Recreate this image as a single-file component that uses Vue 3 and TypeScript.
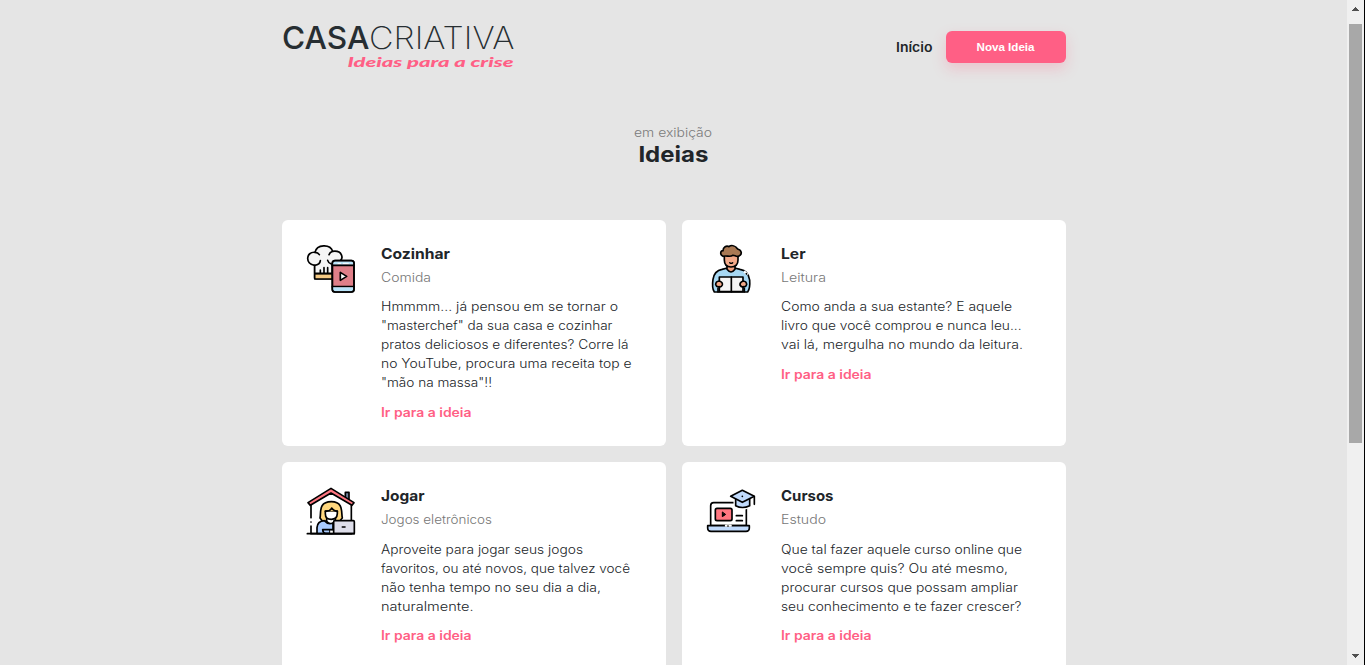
<script setup lang="ts">
import type { Directive } from 'vue'

interface Line { text: string; width: number }
interface Idea {
  icon: string
  title: Line
  category: Line
  lines: Line[]
}

const link: Line = { text: 'Ir para a ideia', width: 90.5 }

const ideas: Idea[] = [
  {
    icon: 'chef',
    title: { text: 'Cozinhar', width: 69 },
    category: { text: 'Comida', width: 50 },
    lines: [
      { text: 'Hmmmm... já pensou em se tornar o', width: 237 },
      { text: '"masterchef" da sua casa e cozinhar', width: 231.5 },
      { text: 'pratos deliciosos e diferentes? Corre lá', width: 247.5 },
      { text: 'no YouTube, procura uma receita top e', width: 250.5 },
      { text: '"mão na massa"!!', width: 111 },
    ],
  },
  {
    icon: 'reader',
    title: { text: 'Ler', width: 24.5 },
    category: { text: 'Leitura', width: 45 },
    lines: [
      { text: 'Como anda a sua estante? E aquele', width: 231 },
      { text: 'livro que você comprou e nunca leu...', width: 240.5 },
      { text: 'vai lá, mergulha no mundo da leitura.', width: 242 },
    ],
  },
  {
    icon: 'home',
    title: { text: 'Jogar', width: 43.5 },
    category: { text: 'Jogos eletrônicos', width: 111 },
    lines: [
      { text: 'Aproveite para jogar seus jogos', width: 202 },
      { text: 'favoritos, ou até novos, que talvez você', width: 249 },
      { text: 'não tenha tempo no seu dia a dia,', width: 220 },
      { text: 'naturalmente.', width: 92.5 },
    ],
  },
  {
    icon: 'course',
    title: { text: 'Cursos', width: 52.5 },
    category: { text: 'Estudo', width: 45 },
    lines: [
      { text: 'Que tal fazer aquele curso online que', width: 241 },
      { text: 'você sempre quis? Ou até mesmo,', width: 227 },
      { text: 'procurar cursos que possam ampliar', width: 237 },
      { text: 'seu conhecimento e te fazer crescer?', width: 240.5 },
    ],
  },
]

// Widens a line of text so that it takes the given measure.
const vFit: Directive<HTMLElement, number> = {
  mounted(el, { value }) {
    const natural = el.getBoundingClientRect().width
    if (natural > 0) el.style.transform = `scaleX(${value / natural})`
  },
}
</script>

<template>
  <div class="window">
    <div class="page">
      <header class="header">
        <svg class="logo" width="236" height="54" viewBox="0 -4 236 54">
          <text class="logo-strong" x="1" y="27" textLength="87.5" lengthAdjust="spacingAndGlyphs">CASA</text>
          <text class="logo-thin" x="88" y="27" textLength="145.5" lengthAdjust="spacingAndGlyphs">CRIATIVA</text>
          <text class="logo-tag" x="66.5" y="44.5" textLength="166" lengthAdjust="spacingAndGlyphs">Ideias para a crise</text>
        </svg>
        <nav class="nav">
          <a class="home-link"><span v-fit="36.5" class="fit">Início</span></a>
          <button class="button"><span v-fit="58" class="fit centered">Nova Ideia</span></button>
        </nav>
      </header>

      <section class="heading">
        <p><span v-fit="78" class="fit centered">em exibição</span></p>
        <h1><span v-fit="70" class="fit centered">Ideias</span></h1>
      </section>

      <section class="grid">
        <article v-for="idea in ideas" :key="idea.icon" class="card">
          <svg class="icon" width="50" height="50" viewBox="18 18 150 150">
            <g v-if="idea.icon === 'chef'" class="ink">
              <path d="M44 80V122H98V80" fill="#fff" />
              <path d="M44 107H98V123H48Q44 123 44 119Z" fill="#f4c983" />
              <path d="M44 82C14 78 18 40 45 43C50 18 91 17 98 40C128 36 131 62 119 70L97 82V106H44Z" fill="#f5f5f5" />
              <path d="M45 43Q54 43 58 50M98 40Q89 43 87 50M44 82Q60 80 61 68M83 67Q85 75 94 78M61 96V105M72 89V105M83 89V105" />
              <rect x="97" y="68" width="65" height="94" rx="8" fill="#df7f89" />
              <path d="M99 80V76Q99 70 105 70H154Q160 70 160 76V80Z" fill="#b9e5fa" stroke="none" />
              <path d="M97 82H162M97 146H162" />
              <path d="M99 148H160V154Q160 160 154 160H105Q99 160 99 154Z" fill="#b9e5fa" stroke="none" />
              <path d="M114 76H122M130 76H145" stroke="#fff" stroke-width="3" />
              <rect x="97" y="68" width="65" height="94" rx="8" />
              <path d="M121 103V127L140 115Z" fill="#fff" />
            </g>
            <g v-else-if="idea.icon === 'reader'" class="ink">
              <path d="M43 162Q35 150 39 124Q43 98 66 94L82 90H104L120 94Q145 98 149 126Q151 151 143 162Z" fill="#a7d8f3" />
              <path d="M81 84V94Q93 110 105 94V84" fill="#ef9f7d" />
              <path d="M73 49V66Q73 87 93 87Q114 87 114 66V49Z" fill="#f2a989" />
              <path d="M69 55C58 49 62 38 69 38C69 27 80 22 86 26C96 20 107 24 113 33C126 37 127 49 117 54C110 59 103 50 98 52C90 59 80 51 69 55Z" fill="#a97954" />
              <path d="M89 74Q94 78 98 74" stroke-width="4" />
              <path d="M54 151V162M133 151V162" />
              <path d="M58 117H129V161H58Z" fill="#f5f5f5" />
              <path d="M94 117V161" />
              <path d="M58 129Q69 133 67 141Q64 148 58 146Q49 148 47 140Q47 130 58 129ZM129 129Q119 133 120 141Q124 148 129 146Q138 148 140 140Q140 130 129 129Z" fill="#f2a989" />
              <path d="M132 100L144 110" stroke="#fff" stroke-width="7" stroke-linecap="butt" />
              <path d="M139 107L140 108" />
            </g>
            <g v-else-if="idea.icon === 'home'" class="ink">
              <path d="M136 66V37H147V75" fill="#6f809a" />
              <path d="M33 72L93 36L154 72V161H33Z" fill="#fff" />
              <path d="M24 68L93 25L162 68L156 76L93 39L31 76Z" fill="#ff7680" />
              <path d="M60 114C64 99 54 65 94 65C132 65 123 99 127 114L119 123H67Z" fill="#ffd77e" />
              <path d="M80 114V124Q92 140 106 124V114" fill="#fff" />
              <path d="M76 93H112V101Q111 118 94 118Q76 118 76 101Z" fill="#fff" />
              <path d="M76 94Q91 94 95 84Q101 93 112 94" fill="#ffd77e" />
              <path d="M51 160V143Q52 124 73 122Q84 135 99 129V161Z" fill="#a9cbff" />
              <path d="M68 149H97V160H77Q69 160 68 149Z" fill="#a9cbff" />
              <path d="M89 151V160H101V151Z" fill="#fff" stroke-width="3" />
              <rect x="101" y="122" width="62" height="39" rx="3" fill="#dedeea" />
              <path d="M127 141H135M22 161H163" />
              <path d="M33 119V133" stroke="#fff" stroke-width="8" />
              <path d="M33 126V126.2" />
            </g>
            <g v-else class="ink">
              <path d="M32 137V77Q32 68 41 68H130Q139 68 139 77V137Z" fill="#fff" />
              <path d="M23 137H148V144Q148 154 138 154H33Q23 154 23 144Z" fill="#c0dafc" />
              <rect x="46" y="85" width="50" height="37" rx="5" fill="#ff7680" />
              <path d="M67 97V110L76 104Z" fill="#000" stroke-width="3" />
              <path d="M109 107H127M109 122H127" />
              <path d="M78 137H92" stroke="#fff" stroke-width="7" />
              <path d="M84 138V138.2" />
              <path d="M107 57V77Q127 88 149 77V57Z" fill="#c0dafc" stroke="#fff" stroke-width="13" />
              <path d="M107 57V77Q127 88 149 77V57Z" fill="#c0dafc" />
              <path d="M92 49L127 31L163 49L127 67Z" fill="#c0dafc" />
              <path d="M127 49V49.2M163 50V73" />
            </g>
          </svg>
          <div class="body">
            <h3><span v-fit="idea.title.width" class="fit">{{ idea.title.text }}</span></h3>
            <p class="category"><span v-fit="idea.category.width" class="fit">{{ idea.category.text }}</span></p>
            <p class="description">
              <span v-for="line in idea.lines" :key="line.text" class="line">
                <span v-fit="line.width" class="fit">{{ line.text }}</span>
              </span>
            </p>
            <a class="more"><span v-fit="link.width" class="fit">{{ link.text }}</span></a>
          </div>
        </article>
      </section>
    </div>

    <aside class="scrollbar">
      <svg width="7" height="4" viewBox="0 0 7 4" shape-rendering="crispEdges"><path d="M0 4V3H1V2H2V1H3V0H4V1H5V2H6V3H7V4Z" /></svg>
      <div class="thumb"></div>
      <svg width="7" height="4" viewBox="0 0 7 4" shape-rendering="crispEdges"><path d="M0 0V1H1V2H2V3H3V4H4V3H5V2H6V1H7V0Z" /></svg>
    </aside>
  </div>
</template>

<style>
body {
  margin: 0;
  overflow: hidden;
}
</style>

<style scoped>
.window {
  display: flex;
  height: 665px;
  overflow: hidden;
  background: #e5e5e5;
  color: #212529;
  font-family: Inter, "Open Sans", sans-serif;
}
.page {
  flex: 1;
}
h1, h3, p {
  margin: 0;
}
.fit {
  display: inline-block;
  white-space: nowrap;
  transform-origin: left center;
}
.fit.centered {
  transform-origin: center;
}
.header {
  display: flex;
  justify-content: space-between;
  width: 784px;
  height: 54px;
  margin: 0 auto;
  padding: 18px 0 0 1px;
}
.logo {
  margin-left: -1px;
  overflow: visible;
}
.logo-strong, .logo-thin {
  font-size: 31px;
  fill: #272e32;
}
.logo-strong {
  font-weight: 450;
}
.logo-thin {
  font-weight: 200;
}
.logo-tag {
  font: italic 900 13.5px Lato, sans-serif;
  fill: #ff5f85;
}
.nav {
  display: flex;
  align-items: center;
  gap: 14px;
  height: 32px;
  margin-top: 13px;
}
.home-link {
  width: 36px;
  font-size: 13px;
  font-weight: 600;
}
.button {
  width: 120px;
  height: 32px;
  padding: 0;
  border: 0;
  border-radius: 6px;
  background: #ff5f85;
  box-shadow: 0 6px 14px rgba(255, 95, 133, 0.25);
  color: #fff;
  font: bold 11px "Liberation Sans", sans-serif;
}
.heading {
  padding-top: 52px;
  text-align: center;
}
.heading p {
  color: #7b7b7b;
  font-size: 12.5px;
  font-weight: 300;
  line-height: 18px;
}
.heading h1 {
  font-size: 21.5px;
  font-weight: 700;
  line-height: 24px;
}
.grid {
  display: grid;
  grid-template-columns: 384px 384px;
  gap: 16px;
  width: 784px;
  margin: 54px auto 0;
  padding-left: 1px;
}
.card {
  display: flex;
  gap: 25px;
  box-sizing: border-box;
  height: 226px;
  padding: 24px;
  border-radius: 6px;
  background: #fff;
}
.icon {
  flex: none;
}
.ink {
  fill: none;
  stroke: #000;
  stroke-width: 5;
  stroke-linejoin: round;
  stroke-linecap: round;
}
h3 {
  font-size: 14.5px;
  font-weight: 700;
  line-height: 20px;
}
.category {
  margin-top: 4px;
  color: #777;
  font-size: 12.5px;
  font-weight: 300;
  line-height: 19px;
}
.description {
  margin-top: 10px;
  font-size: 12.5px;
  font-weight: 300;
  line-height: 19px;
}
.card:nth-child(n + 3) .description {
  margin-top: 11px;
}
.card:nth-child(n + 3) .more {
  margin-top: 10px;
}
.line {
  display: block;
  height: 19px;
}
.more {
  display: block;
  margin-top: 11px;
  color: #ff5f85;
  font-size: 12.5px;
  font-weight: 600;
  line-height: 19px;
}
.scrollbar {
  display: flex;
  flex-direction: column;
  align-items: center;
  box-sizing: border-box;
  width: 18px;
  height: 665px;
  padding: 7px 0;
  border-right: 1px solid #000;
  background: #f0f0f0;
  fill: #505050;
}
.thumb {
  width: 13px;
  height: 419px;
  margin: 13px 0 auto;
  background: #a8a8a8;
}
</style>
